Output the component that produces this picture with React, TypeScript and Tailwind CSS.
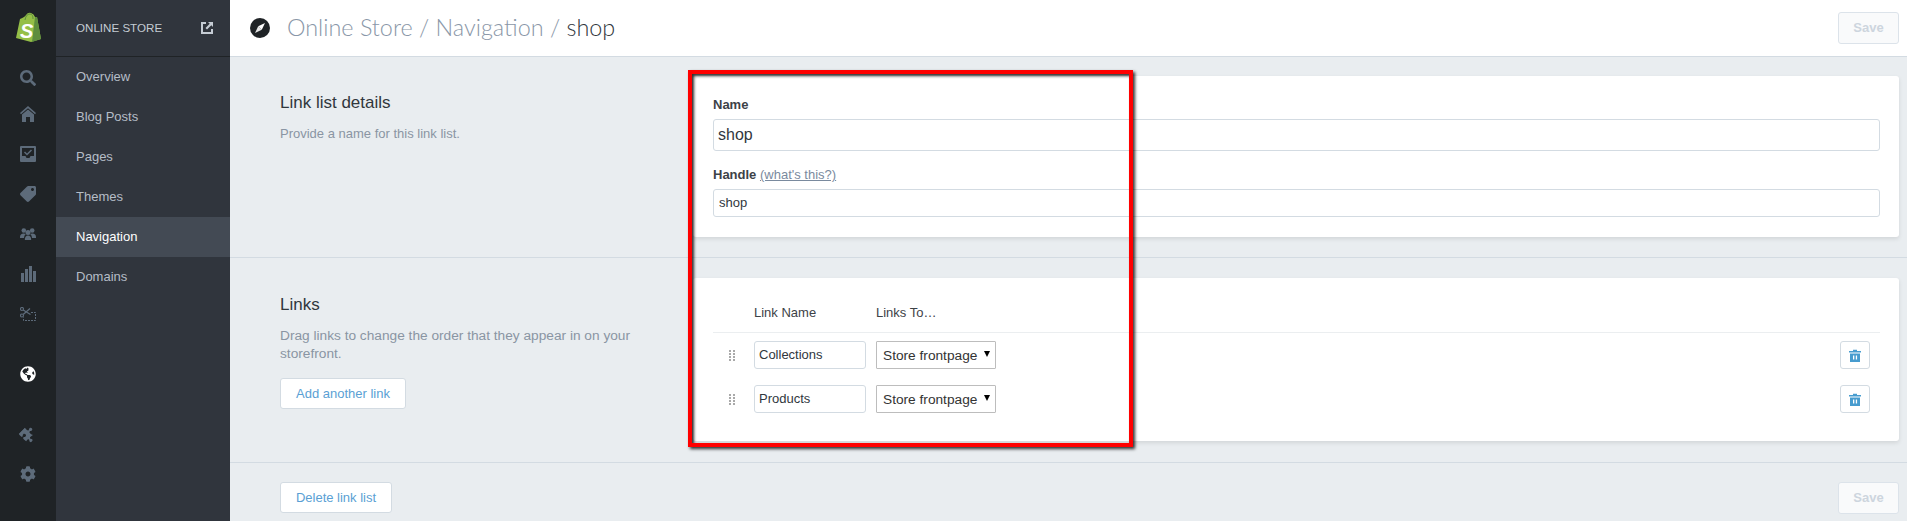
import React from "react";
import { FaPuzzlePiece, FaCog, FaTag, FaSearch, FaGlobeAmericas } from "react-icons/fa";

const RailItem = ({ children, className = "h-10" }: { children: React.ReactNode; className?: string }) => (
  <div className={`flex items-center justify-center text-[#5d6b7a] ${className}`}>{children}</div>
);

const Logo = () => (
  <svg width="27" height="31" viewBox="0 0 27 31">
    <path d="M1 26 L5 7 Q10 5 11 3 Q13 0 16 1 Q19 2 20 5 L22 5 L26 27 L16 30 Z" fill="#95bf47" />
    <path d="M20 5 L22 5 L26 27 L17 30 Z" fill="#5e8e3e" />
    <path d="M10 8 Q11 2 15 2 Q18 2 18 7" fill="none" stroke="#5e8e3e" strokeWidth="1" />
    <text x="5" y="25.500" fill="#fff" fontFamily="'Liberation Sans', sans-serif" fontSize="20" fontWeight="700" fontStyle="italic">S</text>
  </svg>
);

const HomeIcon = () => (
  <svg width="16" height="16" viewBox="0 0 16 16" fill="currentColor">
    <path d="M8 0 L16 7 L15 8.200 L8 2.200 L1 8.200 L0 7 Z" />
    <path d="M8 3.500 L14 8.500 V16 H10 V11 H6 V16 H2 V8.500 Z" />
  </svg>
);

const InboxIcon = () => (
  <svg width="16" height="16" viewBox="0 0 16 16">
    <path fillRule="evenodd" fill="currentColor" d="M1 0h14a1 1 0 0 1 1 1v14a1 1 0 0 1-1 1H1a1 1 0 0 1-1-1V1a1 1 0 0 1 1-1zM2 2v8h3.500l1 2h3l1-2H14V2z" />
    <path d="M4.500 6 L7 8.500 L11.500 4" fill="none" stroke="currentColor" strokeWidth="1.500" />
  </svg>
);

const PeopleIcon = () => (
  <svg width="16" height="12" viewBox="0 0 16 12" fill="currentColor">
    <circle cx="3.800" cy="2.500" r="2.300" />
    <circle cx="12.200" cy="2.500" r="2.300" />
    <path d="M0 9 Q0 5.500 3.800 5.500 Q5 5.500 5.800 6 Q4 7.500 4 10 H0 Z" />
    <path d="M16 9 Q16 5.500 12.200 5.500 Q11 5.500 10.200 6 Q12 7.500 12 10 H16 Z" />
    <circle cx="8" cy="4.500" r="2.500" />
    <path d="M4.800 12 Q4.800 7.500 8 7.500 Q11.200 7.500 11.200 12 Z" />
  </svg>
);

const ChartIcon = () => (
  <svg width="15" height="16" viewBox="0 0 15 16" fill="currentColor">
    <rect x="0" y="7" width="3" height="9" />
    <rect x="4" y="3" width="3" height="13" />
    <rect x="8" y="0" width="3" height="16" />
    <rect x="12" y="5" width="3" height="11" />
  </svg>
);

const ScissorsIcon = () => (
  <svg width="16" height="14" viewBox="0 0 16 14" fill="none" stroke="currentColor">
    <circle cx="2" cy="2" r="1.500" strokeWidth="1.200" />
    <circle cx="2" cy="8.500" r="1.500" strokeWidth="1.200" />
    <path d="M3.200 3 L10.500 7.500 M3.200 7.500 L10 1.500" strokeWidth="1.300" />
    <path d="M11 5.500 H15.500 V13.500 H3.500 V10.500" strokeDasharray="2 1" />
  </svg>
);

const ExternalIcon = () => (
  <svg width="12" height="12" viewBox="0 0 12 12">
    <path d="M5 1H1v10h10V7" fill="none" stroke="#c5ccd4" strokeWidth="2" />
    <path d="M7 0h5v5l-1.700-1.700L6 7.500 4.500 6l4.200-4.300z" fill="#c5ccd4" />
  </svg>
);

const CompassIcon = () => (
  <svg width="20" height="20" viewBox="0 0 20 20">
    <circle cx="10" cy="10" r="10" fill="#1f2326" />
    <path d="M15 5 L11.800 11.800 L8.200 8.200 Z" fill="#fff" />
    <path d="M5 15 L8.200 8.200 L11.800 11.800 Z" fill="#fff" opacity="0.9" />
  </svg>
);

const TrashIcon = () => (
  <svg width="12" height="13" viewBox="0 0 12 13" fill="#479ccf">
    <path d="M0 2h4V0.800h4V2h4v1.500H0z" />
    <path fillRule="evenodd" d="M1 4.500h10V13H1zM4 6.500v4h1.300v-4zM6.800 6.500v4h1.300v-4z" />
  </svg>
);

const DragHandle = () => (
  <svg width="6" height="11" viewBox="0 0 6 11" fill="#a9a9a9">
    {[0, 3, 6, 9].map((y) => (
      <React.Fragment key={y}>
        <rect x="0" y={y} width="2" height="2" />
        <rect x="4" y={y} width="2" height="2" />
      </React.Fragment>
    ))}
  </svg>
);

const SaveButton = () => (
  <button className="w-[61px] h-[32px] rounded-[3px] border border-[#dce3ea] bg-[#f9fafb] text-[#cdd5de] text-[13px] font-bold">
    Save
  </button>
);

const LinkRow = ({ name }: { name: string }) => (
  <div className="flex items-center h-7 pl-4 pr-[10px]">
    <DragHandle />
    <input
      readOnly
      value={name}
      className="ml-[19px] w-[112px] h-7 px-1 pb-[1px] rounded-[3px] border border-[#d3dbe2] bg-white text-[13px] text-[#31373d] outline-none"
    />
    <div className="relative ml-[10px] w-[120px] h-7">
      <select className="appearance-none w-full h-full pl-[6px] pt-[2px] border border-[#bdbdbd] rounded-[1px] bg-white text-[13.700px] text-[#333] outline-none">
        <option>Store frontpage</option>
      </select>
      <span className="absolute right-[6px] top-[10px] w-0 h-0 border-l-[3px] border-r-[3px] border-t-[6px] border-l-transparent border-r-transparent border-t-black" />
    </div>
    <button className="ml-auto w-[30px] h-7 flex items-center justify-center rounded-[3px] border border-[#d3dbe2] bg-white">
      <TrashIcon />
    </button>
  </div>
);

const SideText = ({ title, children }: { title: string; children: React.ReactNode }) => (
  <div className="w-[463px] shrink-0 pl-[50px] pt-4">
    <h2 className="h-5 leading-[22px] text-[17px] text-[#31373d]">{title}</h2>
    <div className="mt-[13px]">{children}</div>
  </div>
);

export default function App() {
  const nav = ["Overview", "Blog Posts", "Pages", "Themes", "Navigation", "Domains"];
  return (
    <div className="relative flex w-[1907px] h-[521px] overflow-hidden bg-[#e9edf0] text-[13px] font-['Liberation_Sans',Arial,sans-serif]">
      <aside className="w-14 shrink-0 bg-[#1f2326] flex flex-col">
        <div className="h-14 flex items-center justify-center pb-[1px]"><Logo /></div>
        <RailItem className="h-8 mt-[6px]"><FaSearch size={16} /></RailItem>
        <RailItem><HomeIcon /></RailItem>
        <RailItem><InboxIcon /></RailItem>
        <RailItem><FaTag size={16} className="-scale-x-100" /></RailItem>
        <RailItem><PeopleIcon /></RailItem>
        <RailItem><ChartIcon /></RailItem>
        <RailItem><ScissorsIcon /></RailItem>
        <RailItem className="h-10 mt-5 !text-white"><FaGlobeAmericas size={16} /></RailItem>
        <RailItem className="h-10 mt-5"><FaPuzzlePiece size={15} className="rotate-45" /></RailItem>
        <RailItem><FaCog size={16} /></RailItem>
      </aside>

      <nav className="w-[174px] shrink-0 bg-[#30353d]">
        <div className="h-[57px] border-b border-[#1f2326] pl-5 pr-[17px] flex items-center justify-between">
          <span className="text-[11.600px] text-[#c5ccd4] uppercase">Online Store</span>
          <ExternalIcon />
        </div>
        {nav.map((item) => (
          <div
            key={item}
            className={`h-10 pl-5 leading-[40px] ${item === "Navigation" ? "bg-[#434a54] text-white" : "text-[#b5bdc7]"}`}
          >
            {item}
          </div>
        ))}
      </nav>

      <main className="flex-1 min-w-0 flex flex-col">
        <header className="h-[57px] shrink-0 bg-white border-b border-[#d3dbe2] pl-5 pr-2 flex items-center">
          <CompassIcon />
          <h1 className="ml-[17px] pb-[1px] text-[23.400px] font-light text-[#8a97a8] font-['Lato',sans-serif]">
            Online Store / Navigation / <span className="text-[#31373d]">shop</span>
          </h1>
          <div className="ml-auto"><SaveButton /></div>
        </header>

        <section className="flex pt-[19px] pb-5 pr-2 border-b border-[#d3dbe2]">
          <SideText title="Link list details">
            <p className="leading-[18px] text-[#8a95a3]">Provide a name for this link list.</p>
          </SideText>
          <div className="flex-1 h-[161px] bg-white rounded-[3px] shadow-[0_2px_4px_rgba(0,0,0,0.1)] pt-5 pl-5 pr-[19px]">
            <label className="block h-4 leading-[18px] font-bold text-[#3d4247]">Name</label>
            <input
              readOnly
              value="shop"
              className="mt-[7px] block w-full h-8 px-1 rounded-[3px] border border-[#d3dbe2] text-[16px] text-[#31373d] outline-none"
            />
            <label className="mt-[15px] block h-4 leading-[17px] font-bold text-[#3d4247]">
              Handle <a className="font-normal text-[#7a8a9e] underline">(what's this?)</a>
            </label>
            <input
              readOnly
              value="shop"
              className="mt-[7px] block w-full h-7 px-[5px] pb-[2px] rounded-[3px] border border-[#d3dbe2] text-[13px] text-[#31373d] outline-none"
            />
          </div>
        </section>

        <section className="flex pt-5 pb-[21px] pr-2 border-b border-[#d3dbe2]">
          <SideText title="Links">
            <p className="w-[360px] leading-[18px] text-[13.700px] text-[#8a95a3]">
              Drag links to change the order that they appear in on your storefront.
            </p>
            <button className="mt-[15px] block w-[126px] h-[31px] rounded-[3px] border border-[#d3dbe2] bg-white text-[#5a9fd4]">
              Add another link
            </button>
          </SideText>
          <div className="flex-1 h-[163px] bg-white rounded-[3px] shadow-[0_2px_4px_rgba(0,0,0,0.1)] pt-[26px] pl-5 pr-[19px]">
            <div className="flex h-[29px] border-b border-[#ebeef0] pl-[41px] text-[#3d4247] leading-[18px]">
              <span className="w-[122px]">Link Name</span>
              <span>Links To…</span>
            </div>
            <div className="pt-2 flex flex-col gap-4">
              <LinkRow name="Collections" />
              <LinkRow name="Products" />
            </div>
          </div>
        </section>

        <section className="flex justify-between pt-[19px] pl-[50px] pr-2">
          <button className="w-[112px] h-[31px] rounded-[3px] border border-[#d3dbe2] bg-white text-[#5a9fd4]">
            Delete link list
          </button>
          <SaveButton />
        </section>
      </main>

      <div className="absolute left-[688px] top-[70px] w-[445px] h-[377px] border-4 border-[#ff0000] pointer-events-none shadow-[2px_2px_3px_rgba(0,0,0,0.8),inset_2px_2px_3px_rgba(0,0,0,0.8)]" />
    </div>
  );
}
